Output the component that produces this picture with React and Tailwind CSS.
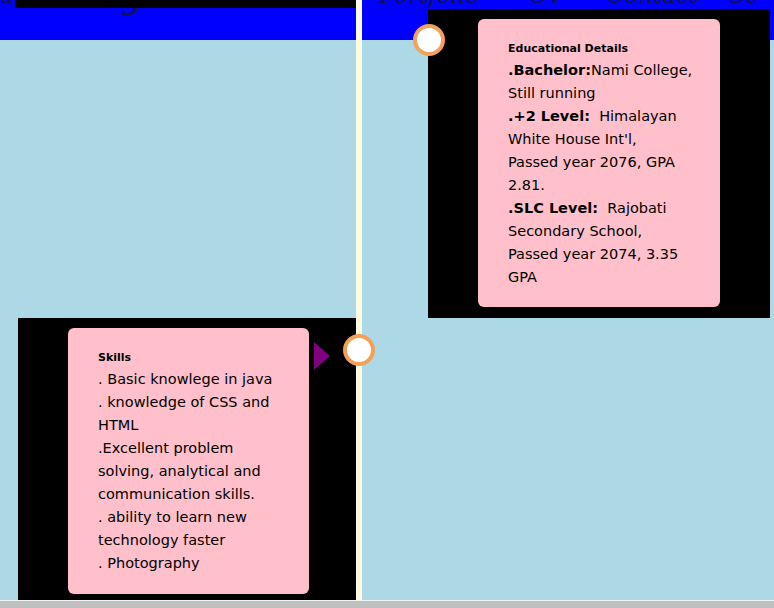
import React from "react";

const eduLines = [
  [<b key="a">.Bachelor:</b>, "Nami College,"],
  ["Still running"],
  [<b key="b">.+2 Level:</b>, "  Himalayan"],
  ["White House Int'l,"],
  ["Passed year 2076, GPA"],
  ["2.81."],
  [<b key="c">.SLC Level:</b>, "  Rajobati"],
  ["Secondary School,"],
  ["Passed year 2074, 3.35"],
  ["GPA"],
];

const skillLines = [
  ". Basic knowlege in java",
  ". knowledge of CSS and",
  "HTML",
  ".Excellent problem",
  "solving, analytical and",
  "communication skills.",
  ". ability to learn new",
  "technology faster",
  ". Photography",
];

function Circle({ className }) {
  return (
    <div
      className={
        "absolute z-20 w-6 h-6 rounded-full bg-white border-4 border-[#f5a05a] box-content " +
        className
      }
    />
  );
}

function Card({ title, children, padBottom }) {
  return (
    <div
      className={
        "bg-[#ffc0cb] rounded-[6px] px-[30px] pt-[20px] text-black " + padBottom
      }
    >
      <div className="text-[11px] font-bold leading-[20px]">{title}</div>
      <div className="text-[14.5px] leading-[23px] whitespace-pre">{children}</div>
    </div>
  );
}

export default function App() {
  return (
    <div
      className="w-[774px] h-[608px] overflow-hidden flex flex-col bg-[#add8e6]"
      style={{ fontFamily: '"DejaVu Sans", sans-serif' }}
    >
      <div className="relative h-[600px] overflow-hidden">
        {/* header */}
        <div className="h-[40px] bg-[#0000ff] flex overflow-hidden">
          <div className="relative w-[356px]">
            <span
              className="absolute left-0 top-[-15px] text-[22px] leading-[22px] italic text-[#10104a]"
              style={{ fontFamily: '"DejaVu Serif", serif' }}
            >
              un
            </span>
            <span
              className="absolute left-[124px] top-[-27px] text-[40px] leading-[40px] italic text-[#10104a]"
              style={{ fontFamily: '"DejaVu Serif", serif' }}
            >
              y
            </span>
            <div className="relative ml-[15px] w-[341px] h-[8px] bg-black" />
          </div>
          <div className="w-[6px]" />
          <div
            className="flex ml-[18px] -mt-[16px] h-[22px] text-[23px] leading-[22px] italic text-[#10104a] whitespace-nowrap"
            style={{ fontFamily: '"DejaVu Serif", serif' }}
          >
            <span className="w-[150px]">Portfolio</span>
            <span className="w-[77px]">CV</span>
            <span className="w-[123px]">Contact</span>
            <span>Se</span>
          </div>
        </div>

        {/* timeline */}
        <div className="relative -mt-[31px] flex flex-col">
          <div className="relative ml-[428px] w-[342px] bg-black pl-[50px] pr-[50px] pt-[10px] pb-[11px]">
            <Circle className="left-[-15px] top-[15px]" />
            <Card title="Educational Details" padBottom="pb-[18px]">
              {eduLines.map((l, i) => (
                <div key={i}>{l}</div>
              ))}
            </Card>
          </div>
          <div className="relative ml-[18px] w-[338px] bg-black pl-[50px] pr-[47px] pt-[10px] pb-[10px]">
            <div className="absolute right-[26px] top-[24px] w-0 h-0 border-y-[14px] border-y-transparent border-l-[16px] border-l-[#800080]" />
            <Circle className="right-[-19px] top-[16px]" />
            <Card title="Skills" padBottom="pb-[19px]">
              {skillLines.map((l, i) => (
                <div key={i}>{l}</div>
              ))}
            </Card>
          </div>
        </div>

        {/* vertical line */}
        <div className="absolute z-10 left-[356px] top-0 w-[6px] h-full bg-[#fffbe3]" />
      </div>
      <div className="h-[8px] bg-[#c0c0c0] border-t border-[#f2f2f2]" />
    </div>
  );
}
